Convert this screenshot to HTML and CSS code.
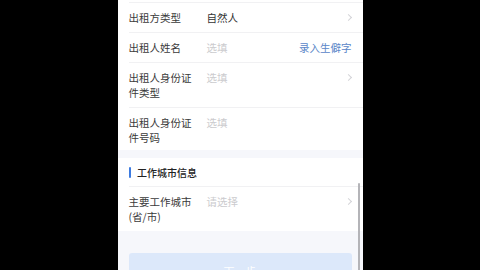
FILE: index.html
```html
<!DOCTYPE html>
<html>
<head>
    <title>出租人信息</title>
    <link rel="stylesheet" href="styles.css">
</head>
<body>
    <div class="screen">
        <div class="card">
            <div class="top-cut"></div>
            <div class="row">
                <div class="label">出租方类型</div>
                <div class="value">自然人</div>
                <span class="chevron"></span>
            </div>
            <div class="row">
                <div class="label">出租人姓名</div>
                <div class="value placeholder">选填</div>
                <a class="link">录入生僻字</a>
            </div>
            <div class="row">
                <div class="label">出租人身份证件类型</div>
                <div class="value placeholder">选填</div>
                <span class="chevron"></span>
            </div>
            <div class="row last">
                <div class="label">出租人身份证件号码</div>
                <div class="value placeholder">选填</div>
            </div>
        </div>

        <div class="card">
            <div class="section-title">工作城市信息</div>
            <div class="row">
                <div class="label">主要工作城市(省/市)</div>
                <div class="value placeholder">请选择</div>
                <span class="chevron"></span>
            </div>
        </div>

        <div class="footer">
            <button class="btn">下一步</button>
        </div>

        <div class="scrollbar"></div>
    </div>
</body>
</html>
```

FILE: styles.css
```css
body {
    margin: 0;
    background: #000;
    font-family: "Noto Sans CJK SC", "Noto Sans", sans-serif;
    display: flex;
    justify-content: center;
    height: 270px;
    overflow: hidden;
}
.screen {
    position: relative;
    width: 245px;
    height: 270px;
    overflow: hidden;
    background: #f6f7fb;
}
.card {
    background: #fff;
    margin-bottom: 8px;
}
.top-cut { height: 2px; }
.row {
    display: flex;
    align-items: flex-start;
    margin-left: 11px;
    padding: 7px 11px 7px 0;
    border-top: 1px solid #f1f1f3;
    font-size: 10.5px;
    line-height: 15px;
}
.row.last { padding-bottom: 5px; }
.label {
    width: 66px;
    margin-right: 12px;
    color: #3a3a3a;
}
.value {
    flex: 1;
    color: #333;
}
.placeholder { color: #cbcbce; }
.link { color: #5a86c8; }
.chevron {
    width: 4px;
    height: 4px;
    margin: 5px 1px 0 0;
    border-top: 1px solid #d4d4d8;
    border-right: 1px solid #d4d4d8;
    transform: rotate(45deg);
}
.section-title {
    display: flex;
    align-items: center;
    height: 28px;
    padding-left: 11px;
    font-size: 10px;
    font-weight: 500;
    color: #222;
}
.section-title::before {
    content: "";
    width: 2.5px;
    height: 11px;
    margin-right: 6px;
    border-radius: 1px;
    background: #3d7be0;
}
.footer {
    padding: 14px 11px 0;
}
.btn {
    width: 100%;
    height: 36px;
    border: 0;
    border-radius: 3px;
    background: #dce8fa;
    color: #fff;
    font-family: inherit;
    font-size: 11px;
}
.scrollbar {
    position: absolute;
    right: 3px;
    top: 183px;
    width: 1.5px;
    height: 90px;
    border-radius: 1px;
    background: #b4b4b8;
}
```
